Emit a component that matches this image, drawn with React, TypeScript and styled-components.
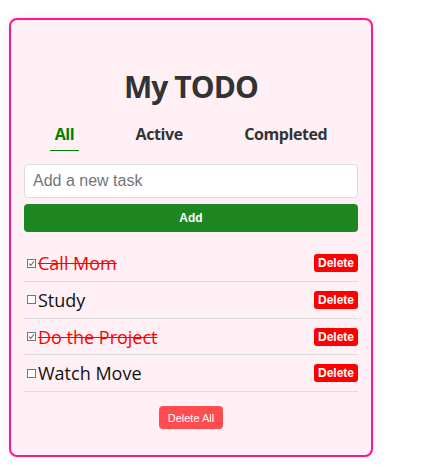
import React, { useState } from "react";
import styled, { createGlobalStyle } from "styled-components";

const Global = createGlobalStyle`
  html, body { margin: 0; padding: 0; background: #ffffff; }
  body { font-family: "Open Sans", "Noto Sans", sans-serif; }
  * { box-sizing: border-box; }
`;

const Page = styled.div`
  padding: 18px 0 0 9px;
`;

const Card = styled.div`
  width: 364px;
  border: 2px solid #ff1493;
  border-radius: 8px;
  background: #fff0f5;
  box-shadow: 0 0 10px rgba(0, 0, 0, 0.08);
  padding: 0 13px 26px;
  display: flex;
  flex-direction: column;
`;

const Title = styled.h1`
  margin: 46px 0 0;
  text-align: center;
  font-size: 30px;
  font-weight: 700;
  letter-spacing: -0.9px;
  color: #333;
  line-height: 41px;
`;

const Tabs = styled.div`
  display: flex;
  justify-content: space-around;
  margin-top: 13px;
`;

const Tab = styled.button<{ $active?: boolean }>`
  background: none;
  border: none;
  border-bottom: 1px solid ${(p) => (p.$active ? "#008000" : "transparent")};
  padding: 3px 5px 5px;
  font-family: "Open Sans", sans-serif;
  font-size: 16px;
  font-weight: 700;
  letter-spacing: -0.4px;
  line-height: 22px;
  color: ${(p) => (p.$active ? "#008000" : "#333")};
  cursor: pointer;
`;

const Input = styled.input`
  margin-top: 13px;
  height: 34px;
  width: 100%;
  border: 1px solid #ddd;
  border-radius: 4px;
  padding: 0 8px;
  font-family: "Liberation Sans", Arial, sans-serif;
  font-size: 16px;
  background: #fff;
  outline: none;
  &::placeholder { color: #757575; }
`;

const AddButton = styled.button`
  margin-top: 6px;
  height: 28px;
  width: 100%;
  border: none;
  border-radius: 4px;
  background: #1e8722;
  color: #fff;
  font-family: "Liberation Sans", Arial, sans-serif;
  font-size: 12px;
  font-weight: 700;
  cursor: pointer;
`;

const List = styled.ul`
  list-style: none;
  margin: 13px 0 0;
  padding: 0;
`;

const Row = styled.li`
  display: flex;
  align-items: center;
  justify-content: space-between;
  padding: 6px 0 5.8px;
  border-bottom: 1px solid #ddd;
`;

const Left = styled.label`
  display: flex;
  align-items: center;
  gap: 2px;
  padding-left: 3px;
`;

const Box = styled.span`
  width: 9px;
  height: 9px;
  border: 1px solid #767676;
  background: #fff;
  display: inline-flex;
  align-items: center;
  justify-content: center;
`;

const TaskText = styled.span<{ $done?: boolean }>`
  font-size: 18px;
  line-height: 24px;
  color: ${(p) => (p.$done ? "#ff0000" : "#111")};
  text-decoration: ${(p) => (p.$done ? "line-through" : "none")};
`;

const DeleteButton = styled.button`
  height: 18px;
  padding: 0 4px;
  border: none;
  border-radius: 3px;
  background: #ff0000;
  color: #fff;
  font-family: "Liberation Sans", Arial, sans-serif;
  font-size: 12px;
  font-weight: 700;
  cursor: pointer;
`;

const DeleteAll = styled.button`
  align-self: center;
  margin-top: 14px;
  width: 64px;
  height: 23px;
  border: none;
  border-radius: 4px;
  background: #ff4d4f;
  color: #fff;
  font-family: "Liberation Sans", Arial, sans-serif;
  font-size: 11px;
  cursor: pointer;
`;

const CheckMark = () => (
  <svg width="7" height="7" viewBox="0 0 7 7">
    <path d="M1 3.6 L2.8 5.3 L6 1.4" fill="none" stroke="#767676" strokeWidth="1.2" />
  </svg>
);

type Task = { id: number; text: string; done: boolean };

export default function App() {
  const [tasks] = useState<Task[]>([
    { id: 1, text: "Call Mom", done: true },
    { id: 2, text: "Study", done: false },
    { id: 3, text: "Do the Project", done: true },
    { id: 4, text: "Watch Move", done: false },
  ]);
  return (
    <>
      <Global />
      <Page>
        <Card>
          <Title>My TODO</Title>
          <Tabs>
            <Tab $active>All</Tab>
            <Tab>Active</Tab>
            <Tab>Completed</Tab>
          </Tabs>
          <Input placeholder="Add a new task" />
          <AddButton>Add</AddButton>
          <List>
            {tasks.map((t) => (
              <Row key={t.id}>
                <Left>
                  <Box>{t.done && <CheckMark />}</Box>
                  <TaskText $done={t.done}>{t.text}</TaskText>
                </Left>
                <DeleteButton>Delete</DeleteButton>
              </Row>
            ))}
          </List>
          <DeleteAll>Delete All</DeleteAll>
        </Card>
      </Page>
    </>
  );
}
